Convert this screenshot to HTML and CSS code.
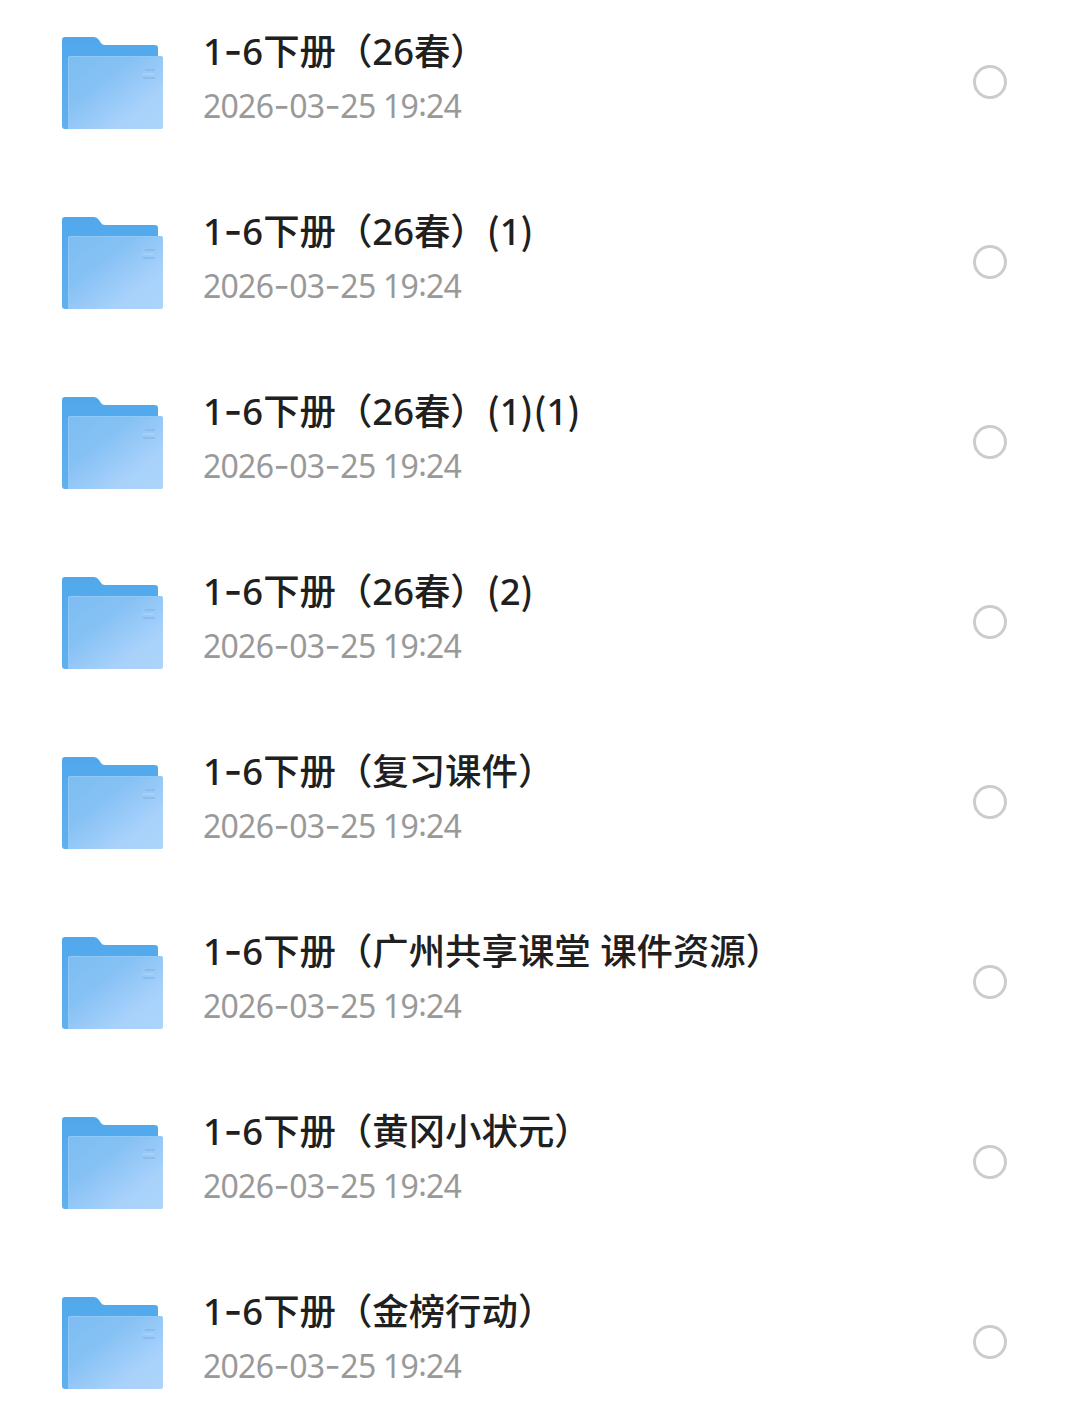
FILE: index.html
```html
<!DOCTYPE html>
<html lang="zh-CN">
<head>
    <meta charset="UTF-8">
    <meta name="viewport" content="width=device-width, initial-scale=1.0">
    <title>文件列表</title>
    <link rel="stylesheet" href="styles.css">
</head>
<body>
    <svg class="sprite" width="0" height="0">
        <defs>
            <linearGradient id="front" x1="0" y1="0" x2="1" y2="1">
                <stop offset="0" stop-color="#7cbdf2"/>
                <stop offset="0.35" stop-color="#86c1f4"/>
                <stop offset="0.75" stop-color="#a9d2fb"/>
                <stop offset="1" stop-color="#add4fa"/>
            </linearGradient>
            <linearGradient id="back" x1="0" y1="0" x2="0" y2="1">
                <stop offset="0" stop-color="#50a8eb"/>
                <stop offset="1" stop-color="#62b0ee"/>
            </linearGradient>
        </defs>
        <symbol id="folder" viewBox="0 0 102 94">
            <path fill="url(#back)" d="M3 1H32Q35 1 37 4L39 7Q40 9 43 9H93Q96 9 96 12V93H3Q0 93 0 90V4Q0 1 3 1Z"/>
            <path fill="url(#front)" d="M8 20H99Q101 20 101 22V91Q101 93 99 93H6V22Q6 20 8 20Z"/>
            <path fill="none" stroke="#91c9f8" stroke-width="1" d="M6.5 93V22Q6.5 20.5 8 20.5H99"/>
            <path fill="none" stroke="#86b8ea" stroke-width="1.5" d="M83 34H93M81 42H93"/>
            <path fill="none" stroke="#b0d5fa" stroke-width="1" d="M81 38H92"/>
        </symbol>
    </svg>

    <ul class="lista" id="lista"></ul>

    <template id="linha">
        <li class="item">
            <svg class="pasta"><use href="#folder"/></svg>
            <div class="info">
                <div class="nome">1<span class="traco">-</span>6下册<span class="titulo"></span></div>
                <div class="data">2026<span class="traco">-</span>03<span class="traco">-</span>25 19<span class="pontos">:</span>24</div>
            </div>
            <span class="marcar"></span>
        </li>
    </template>

    <script>
        const pastas = [
            '（26春）',
            '（26春）(1)',
            '（26春）(1)(1)',
            '（26春）(2)',
            '（复习课件）',
            '（广州共享课堂 课件资源）',
            '（黄冈小状元）',
            '（金榜行动）'
        ]
        const lista = document.querySelector('#lista')
        const linha = document.querySelector('#linha')
        for(let i=0; i<pastas.length; i++){
            let item = linha.content.cloneNode(true)
            // os parenteses simples levam um pouco mais de espaco
            item.querySelector('.titulo').innerHTML = pastas[i].replace(/[()]/g, '<span class="par">$&</span>')
            lista.appendChild(item)
        }
    </script>
</body>
</html>
```
FILE: styles.css
```css
body{
    margin: 0;
    height: 1421px;
    overflow: hidden;
    background-color: #fff;
    font-family: "Noto Sans", "Noto Sans CJK SC", sans-serif;
}
.sprite{
    display: block;
}
.lista{
    list-style: none;
    margin: 0;
    padding: 0;
}
.item{
    display: flex;
    align-items: flex-start;
    box-sizing: border-box;
    height: 180px;
    padding: 24px 73px 0 62px;
}
.pasta{
    width: 102px;
    height: 94px;
    margin-top: 12px;
    flex-shrink: 0;
}
.info{
    flex: 1;
    margin-left: 39px;
    white-space: nowrap;
}
.nome{
    height: 55px;
    line-height: 54px;
    font-size: 36.4px;
    font-weight: 500;
    color: #202020;
}
.data{
    height: 54px;
    line-height: 54px;
    font-size: 32px;
    letter-spacing: -0.75px;
    color: #999;
}
.traco{
    display: inline-block;
    width: 18.5px;
    line-height: 1;
    font-family: Inter, sans-serif;
    font-size: 1.1em;
    text-align: center;
}
.data .traco{
    width: 16px;
}
.pontos{
    display: inline-block;
    line-height: 1;
    vertical-align: 2px;
}
.par{
    display: inline-block;
    width: 13px;
    line-height: 1;
    text-align: center;
    font-family: "Noto Sans CJK SC", sans-serif;
}
.marcar{
    box-sizing: border-box;
    width: 34px;
    height: 34px;
    margin-top: 41px;
    border: 3px solid #ccc;
    border-radius: 50%;
}
```
